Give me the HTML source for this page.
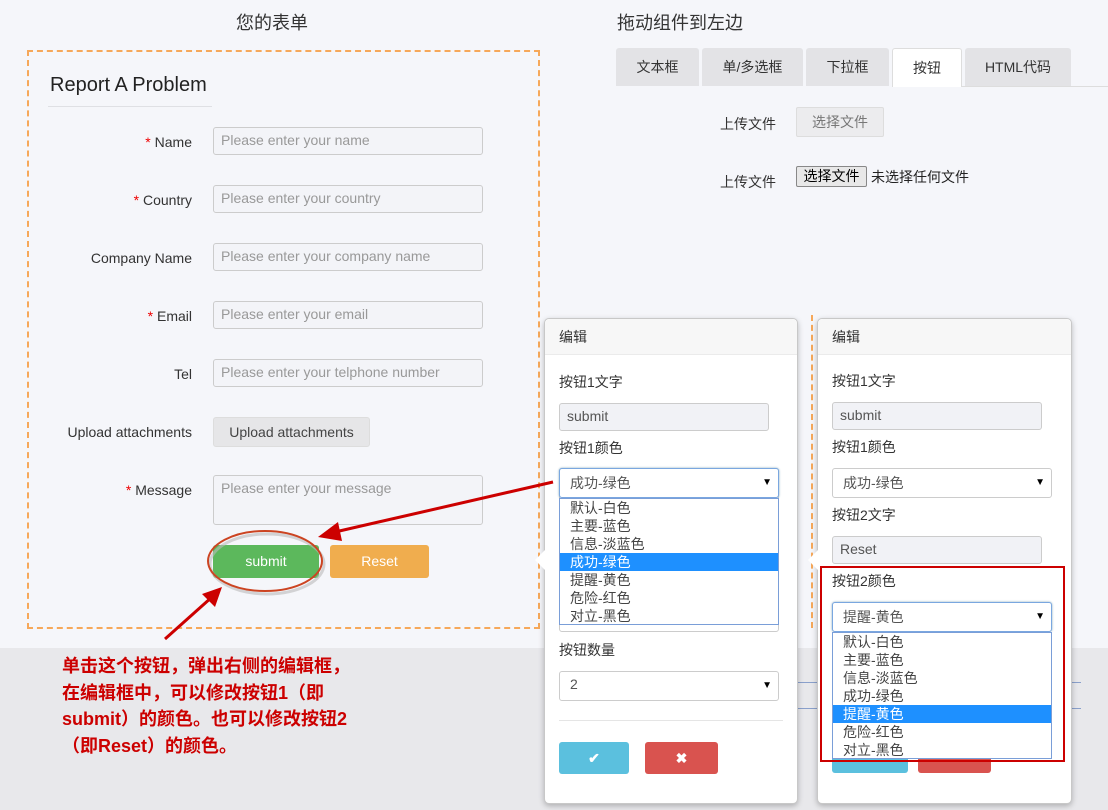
<!DOCTYPE html>
<html><head><meta charset="utf-8"><style>
*{box-sizing:border-box;margin:0;padding:0}
body{width:1108px;height:810px;position:relative;overflow:hidden;background:#f5f6fa;font-family:"Liberation Sans","Noto Sans CJK SC",sans-serif;font-size:14px;color:#333}
.a{position:absolute}
.band{left:0;top:648px;width:1108px;height:162px;background:#e8e8eb}
.inp{position:absolute;background:#f3f4f8;border:1px solid #ccc;border-radius:3px;color:#999;font-size:14px;padding:4px 7px;height:28px}
.lbl{position:absolute;width:160px;text-align:right;font-size:14px;color:#333;left:32px}
.st{color:#e00}
.tab{position:absolute;top:48px;height:38px;background:#e3e3e6;border-radius:3px 3px 0 0;text-align:center;line-height:38px;font-size:14px;color:#333}
.pop{position:absolute;background:#fff;border:1px solid #c8c8c8;border-radius:5px;box-shadow:0 2px 6px rgba(0,0,0,.25)}
.ph{height:36px;background:#f7f7f7;border-bottom:1px solid #ebebeb;padding:8px 14px;font-size:14px;border-radius:5px 5px 0 0}
.pt{position:absolute;left:14px;font-size:14px}
.pin{position:absolute;left:14px;width:210px;height:28px;background:#f1f2f6;border:1px solid #ccc;border-radius:3px;padding:4px 7px;color:#555;font-size:14px}
.sel{position:absolute;left:14px;width:220px;height:30px;background:#fff;border:1px solid #ccc;border-radius:3px;padding:4px 10px;font-size:14px;color:#555}
.sel:after{content:"▼";position:absolute;right:6px;top:8px;font-size:10px;color:#000}
.sel.f{border-color:#7aa7e0;box-shadow:0 0 2px #8ab}
.lb{position:absolute;left:14px;width:220px;background:#fff;border:1px solid #7a9ed8;font-size:14px;color:#444;line-height:18px}
.lb div{padding-left:10px;height:18px}
.lb .h{background:#1e90ff;color:#fff}
.ann{left:62px;top:653px;color:#c00;font-weight:bold;font-size:18px;line-height:26.5px}
</style></head><body>
<div class="a band"></div>
<div class="a" style="left:236px;top:9px;font-size:18px;color:#333">您的表单</div>
<div class="a" style="left:617px;top:9px;font-size:18px;color:#333">拖动组件到左边</div>

<div class="a" style="left:27px;top:50px;width:513px;height:579px;border:2px dashed #f6a85a"></div>
<div class="a" style="left:50px;top:74px;font-size:20px;color:#222">Report A Problem</div>
<div class="a" style="left:48px;top:106px;width:164px;height:1px;background:#dfe0e4"></div>

<div class="lbl" style="top:134px"><span class="st">* </span>Name</div>
<div class="inp" style="left:213px;top:127px;width:270px">Please enter your name</div>
<div class="lbl" style="top:192px"><span class="st">* </span>Country</div>
<div class="inp" style="left:213px;top:185px;width:270px">Please enter your country</div>
<div class="lbl" style="top:250px">Company Name</div>
<div class="inp" style="left:213px;top:243px;width:270px">Please enter your company name</div>
<div class="lbl" style="top:308px"><span class="st">* </span>Email</div>
<div class="inp" style="left:213px;top:301px;width:270px">Please enter your email</div>
<div class="lbl" style="top:366px">Tel</div>
<div class="inp" style="left:213px;top:359px;width:270px">Please enter your telphone number</div>
<div class="lbl" style="top:424px">Upload attachments</div>
<div class="a" style="left:213px;top:417px;width:157px;height:30px;background:#e6e6e8;border:1px solid #ddd;border-radius:3px;text-align:center;line-height:28px;color:#444">Upload attachments</div>
<div class="lbl" style="top:482px"><span class="st">* </span>Message</div>
<div class="inp" style="left:213px;top:475px;width:270px;height:50px">Please enter your message</div>
<div class="a" style="left:213px;top:545px;width:106px;height:33px;background:#5cb85c;border-radius:3px;color:#fff;text-align:center;line-height:33px">submit</div>
<div class="a" style="left:330px;top:545px;width:99px;height:33px;background:#f0ad4e;border-radius:3px;color:#fff;text-align:center;line-height:33px">Reset</div>

<div class="tab" style="left:616px;width:83px">文本框</div>
<div class="tab" style="left:702px;width:101px">单/多选框</div>
<div class="tab" style="left:806px;width:83px">下拉框</div>
<div class="tab" style="left:892px;width:70px;background:#fff;border:1px solid #ddd;border-bottom:none;height:39px">按钮</div>
<div class="tab" style="left:965px;width:106px">HTML代码</div>
<div class="a" style="left:962px;top:86px;width:146px;height:1px;background:#ddd"></div>
<div class="a" style="left:720px;top:114px">上传文件</div>
<div class="a" style="left:796px;top:107px;width:88px;height:30px;background:#ececee;border:1px solid #ddd;border-radius:2px;text-align:center;line-height:28px;color:#777">选择文件</div>
<div class="a" style="left:720px;top:172px">上传文件</div>
<div class="a" style="left:796px;top:166px;width:71px;height:21px;background:#e8e8e8;border:1px solid #888;border-radius:2px;text-align:center;line-height:19px;color:#000">选择文件</div>
<div class="a" style="left:871px;top:167px;color:#222">未选择任何文件</div>

<div class="a" style="left:811px;top:315px;width:0;height:313px;border-left:2px dashed #f6a85a"></div>
<div class="a" style="left:797px;top:682px;width:20px;height:1px;background:#8aa0cc"></div>
<div class="a" style="left:797px;top:708px;width:20px;height:1px;background:#8aa0cc"></div>
<div class="a" style="left:1071px;top:682px;width:10px;height:1px;background:#8aa0cc"></div>
<div class="a" style="left:1071px;top:708px;width:10px;height:1px;background:#8aa0cc"></div>

<div class="pop" style="left:544px;top:318px;width:254px;height:486px">
<div class="ph">编辑</div>
<div class="pt" style="top:53px">按钮1文字</div>
<div class="pin" style="top:84px">submit</div>
<div class="pt" style="top:119px">按钮1颜色</div>
<div class="sel" style="top:149px;height:164px"></div>
<div class="sel f" style="top:149px">成功-绿色</div>
<div class="lb" style="top:179px;height:127px"><div>默认-白色</div><div>主要-蓝色</div><div>信息-淡蓝色</div><div class="h">成功-绿色</div><div>提醒-黄色</div><div>危险-红色</div><div>对立-黑色</div></div>
<div class="pt" style="top:321px">按钮数量</div>
<div class="sel" style="top:352px">2</div>
<div class="a" style="left:14px;top:401px;width:224px;height:1px;background:#e5e5e5"></div>
<div class="a" style="left:14px;top:423px;width:70px;height:32px;background:#5bc0de;border-radius:3px;color:#fff;text-align:center;line-height:32px;font-weight:bold">✔</div>
<div class="a" style="left:100px;top:423px;width:73px;height:32px;background:#d9534f;border-radius:3px;color:#fff;text-align:center;line-height:32px;font-weight:bold">✖</div>
</div>
<div class="a" style="left:535px;top:550px;width:0;height:0;border-top:10px solid transparent;border-bottom:10px solid transparent;border-right:10px solid #fff"></div>

<div class="pop" style="left:817px;top:318px;width:255px;height:486px">
<div class="ph">编辑</div>
<div class="pt" style="top:52px">按钮1文字</div>
<div class="pin" style="top:83px">submit</div>
<div class="pt" style="top:118px">按钮1颜色</div>
<div class="sel" style="top:149px">成功-绿色</div>
<div class="pt" style="top:186px">按钮2文字</div>
<div class="pin" style="top:217px">Reset</div>
<div class="pt" style="top:252px">按钮2颜色</div>
<div class="sel f" style="top:283px">提醒-黄色</div>
<div class="a" style="left:14px;top:422px;width:76px;height:32px;background:#5bc0de;border-radius:3px"></div>
<div class="a" style="left:100px;top:422px;width:73px;height:32px;background:#d9534f;border-radius:3px"></div>
<div class="lb" style="top:313px;height:127px"><div>默认-白色</div><div>主要-蓝色</div><div>信息-淡蓝色</div><div>成功-绿色</div><div class="h">提醒-黄色</div><div>危险-红色</div><div>对立-黑色</div></div>
</div>
<div class="a" style="left:808px;top:550px;width:0;height:0;border-top:10px solid transparent;border-bottom:10px solid transparent;border-right:10px solid #fff"></div>
<div class="a" style="left:820px;top:566px;width:245px;height:196px;border:2px solid #c00"></div>

<svg class="a" style="left:0;top:0" width="1108" height="810">
<ellipse cx="267" cy="564" rx="57" ry="30" fill="none" stroke="#bbb" stroke-width="3" opacity=".6"/>
<ellipse cx="265" cy="561" rx="57" ry="30" fill="none" stroke="#c42" stroke-width="2"/>
<line x1="553" y1="482" x2="335" y2="532" stroke="#c00" stroke-width="3"/>
<polygon points="318,537 338,522 342,541" fill="#c00"/>
<line x1="165" y1="639" x2="212" y2="597" stroke="#c00" stroke-width="3"/>
<polygon points="222,587 215,607 202,594" fill="#c00"/>
</svg>
<div class="a ann">单击这个按钮，弹出右侧的编辑框，<br>在编辑框中，可以修改按钮1（即<br>submit）的颜色。也可以修改按钮2<br>（即Reset）的颜色。</div>
</body></html>
